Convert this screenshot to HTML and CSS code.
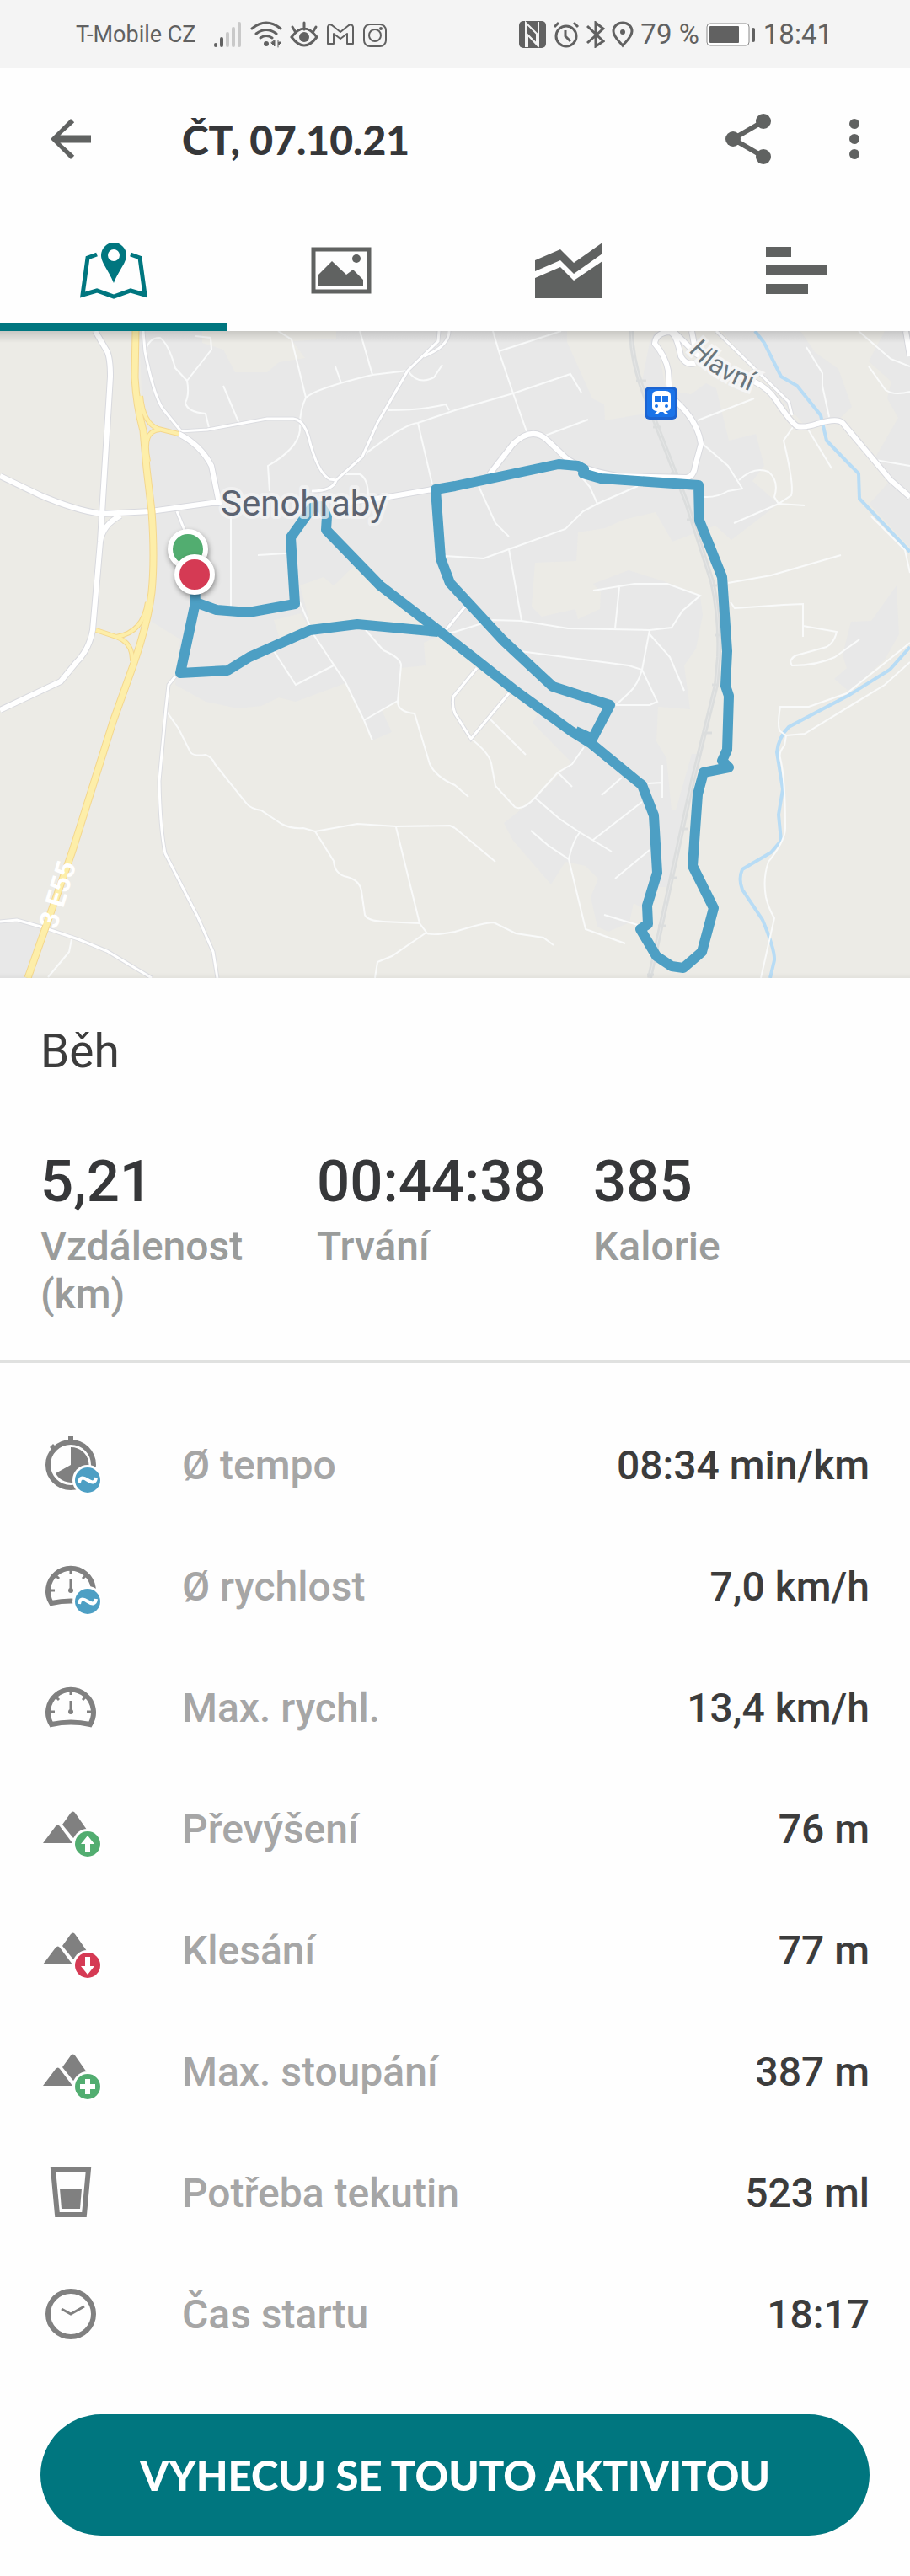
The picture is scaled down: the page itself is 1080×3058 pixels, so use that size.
FILE: index.html
```html
<!DOCTYPE html>
<html lang="cs">
<head>
    <meta charset="UTF-8">
    <meta name="viewport" content="width=device-width, initial-scale=1.0">
    <title>ČT, 07.10.21</title>
    <link rel="stylesheet" href="styles.css">
</head>
<body>
    <div class="status">
        <div class="status-left">
            <span class="carrier">T-Mobile CZ</span>
            <svg class="ic-signal" width="34" height="32" viewBox="0 0 34 32" stroke-width="4" stroke-linecap="round">
                <path d="M2 28v1M9 21v8" stroke="#616161"/>
                <path d="M16 15v14M23 9v20M30 3v26" stroke="#c9c9c9"/>
            </svg>
            <svg width="38" height="32" viewBox="0 0 38 32" fill="none" stroke="#616161" stroke-width="3" stroke-linecap="round">
                <path d="M2 9Q19-5 36 9M7 15q12-9 24 0M12 20q7-5 14 0"/>
                <circle cx="19" cy="27" r="3" fill="#616161" stroke="none"/>
                <path d="M29 23v7l-4-4zM33 23v8M34 25h3l-3 3z" fill="#616161" stroke-width="1"/>
            </svg>
            <svg width="34" height="32" viewBox="0 0 34 32" fill="none" stroke="#616161" stroke-width="3" stroke-linecap="round">
                <path d="M2 19q15-20 30 0q-15 20-30 0zM17 2v8M3 7l3 5M31 7l-3 5"/>
                <circle cx="17" cy="19" r="6" fill="#616161" stroke="none"/>
            </svg>
            <svg class="ic-mail" width="34" height="32" viewBox="0 0 34 32" fill="none" stroke="#616161" stroke-width="2" stroke-linejoin="round">
                <path d="M2 27V7q1-4 5-2l10 8 10-8q4-2 5 2v20h-7V15l-8 6-8-6v12z"/>
            </svg>
            <svg class="ic-insta" width="30" height="32" viewBox="0 0 30 32" fill="none" stroke="#616161" stroke-width="2">
                <rect x="2" y="4" width="26" height="26" rx="7"/>
                <circle cx="15" cy="17" r="7"/>
                <circle cx="22" cy="9" r="1"/>
            </svg>
        </div>
        <div class="status-right">
            <svg class="ic-nfc" width="32" height="32" viewBox="0 0 32 32">
                <rect width="32" height="32" rx="5" fill="#616161"/>
                <path d="M8 31V2l13 13v13L10 16v15M23 1v28L11 17" fill="none" stroke="#f4f4f4" stroke-width="2"/>
            </svg>
            <svg class="ic-alarm" width="32" height="32" viewBox="0 0 32 32" fill="none" stroke="#616161" stroke-width="3">
                <circle cx="16" cy="18" r="12"/>
                <path d="M15 11v7l6 6M2 7l5-5M30 7l-5-5"/>
            </svg>
            <svg class="ic-bt" width="22" height="32" viewBox="0 0 22 32" fill="none" stroke="#616161" stroke-width="3">
                <path d="M1 6l19 18-9 6V2l9 7L1 26"/>
            </svg>
            <svg class="ic-pin" width="26" height="32" viewBox="0 0 26 32" fill="none" stroke="#616161" stroke-width="3">
                <path d="M13 29C9 24 2 19 2 12a11 10 0 0 1 22 0c0 7-7 12-11 17z"/>
                <circle cx="13" cy="13" r="3" fill="#616161" stroke="none"/>
            </svg>
            <span>79 %</span>
            <svg class="ic-battery" width="60" height="28" viewBox="0 0 60 28">
                <rect x="1" y="1" width="50" height="26" rx="4" fill="#fff" stroke="#8a8a8a"/>
                <rect x="4" y="4" width="35" height="20" rx="1" fill="#616161"/>
                <rect x="54" y="6" width="4" height="17" rx="2" fill="#616161"/>
            </svg>
            <span>18:41</span>
        </div>
    </div>

    <header class="topbar">
        <button class="icon-btn" aria-label="Zpět">
            <svg width="72" height="72" viewBox="0 0 24 24"><path d="M20 10.500H7.800l5.600-5.100L12 4l-8 8 8 8 1.400-1.400L7.800 13.500H20z"/></svg>
        </button>
        <h1>ČT, 07.10.21</h1>
        <button class="icon-btn" aria-label="Sdílet">
            <svg width="72" height="72" viewBox="0 0 72 72">
                <path d="M54 15L18 36l36 21" fill="none" stroke="#606261" stroke-width="6"/>
                <circle cx="54" cy="15" r="9"/><circle cx="18" cy="36" r="9"/><circle cx="54" cy="57" r="9"/>
            </svg>
        </button>
        <button class="icon-btn more" aria-label="Více">
            <svg width="72" height="72" viewBox="0 0 72 72">
                <circle cx="36" cy="18" r="6"/><circle cx="36" cy="36" r="6"/><circle cx="36" cy="54" r="6"/>
            </svg>
        </button>
    </header>

    <nav class="tabs">
        <button class="tab active" aria-label="Mapa">
            <svg width="84" height="84" viewBox="0 0 84 84">
                <path d="M22 23L11 27 5 71l17-5 20 7 20-7 17 5-6-44-11-4" fill="none" stroke="#00767f" stroke-width="5"/>
                <path d="M42 9a15 15 0 0 0-15 15c0 9 8 16 15 33 7-17 15-24 15-33A15 15 0 0 0 42 9z" fill="#00767f"/>
                <circle cx="42" cy="24" r="7" fill="#fff"/>
            </svg>
        </button>
        <button class="tab" aria-label="Fotky">
            <svg width="84" height="84" viewBox="0 0 84 84">
                <rect x="9" y="17" width="66" height="50" fill="none" stroke="#606261" stroke-width="5"/>
                <path d="M15 60V47l16-16 17 16 8-6 12 12v7z"/>
                <circle cx="60" cy="28" r="5"/>
            </svg>
        </button>
        <button class="tab" aria-label="Grafy">
            <svg width="84" height="84" viewBox="0 0 84 84">
                <path d="M2 30l30-13 16 16 34-24v13L48 46 32 30 2 43z"/>
                <path d="M2 51l30-13 16 16 34-23v44H2z"/>
            </svg>
        </button>
        <button class="tab" aria-label="Mezičasy">
            <svg width="84" height="84" viewBox="0 0 84 84">
                <path d="M6 14h30v12H6zM6 36h72v12H6zM6 58h50v12H6z"/>
            </svg>
        </button>
    </nav>

    <div class="map">
        <svg viewBox="0 0 1080 768" role="img" aria-label="Trasa aktivity">
            <rect width="1080" height="768" fill="#ecebe6"/>
            <!-- built-up areas -->
            <g fill="#e8e8e8">
                <path d="M165 0H673V13L703 80 717 87 718 106 765 98 762 60 771 13 778 0 790 70 820 75 838 62 850 68 865 130 897 122 907 160 893 178 924 205 868 248 849 231 798 250 778 215 740 224 718 234 686 239 684 273 635 275 631 327 643 339 683 330 686 342 712 330 713 310 704 300 746 284 788 297 831 314 834 337 826 377 812 397 819 449 781 446 779 487 791 507 797 569H802L821 502H833L793 660H781L770 690 752 679 747 702 722 713 709 707 701 672 710 650 695 635 671 630 654 657 609 605 598 584 636 554 678 512 632 465 638 455 520 362 503 370 505 397 476 400 472 439 453 450 465 476 442 486 410 418 351 440 331 435 310 445 282 448 244 440 208 420 214 366 180 345 176 322 184 270 170 118z"/>
                <path d="M857 0h93l17 25 28 20 16 45-16 15-40 7-55-62z"/>
                <path d="M1050 0h30v257l-48-52 25-28-18-27 27-47-13-23 5-20-27-24z"/>
                <path d="M1064 302l3 58-17 30-42 38-18-15 15-13-5-15 10-40 24-1z"/>
                <path d="M0 701l20-2 28 8-14 61H0z"/>
            </g>
            <g fill="#ecebe6">
                <path d="M240 14l25 8 14 27h38l14-12 31-5-15-20 52-3V0H240z"/>
                <path d="M356 302l28-10 12 10 24-23 86 72-82-4-54 8z"/>
                <path d="M325 343l32-8 10 18-34 16z"/>
            </g>
            <!-- river -->
            <g fill="none" stroke="#b8dcf5" stroke-width="4">
                <path d="M896 0L907 14 927 54 946 65 974 100 981 130 1004 154 1019 169 1020 199 1080 262"/>
                <path d="M1080 375L1056 402 1008 432 936 470Q924 482 922 500L929 544 924 574 927 605 915 619 881 639Q876 650 881 663L905 699Q920 735 919 747L914 768"/>
            </g>
            <!-- railway -->
            <g fill="none" stroke="#dbdddd">
                <path d="M749 0Q750 40 768 83L815 204 845 297Q855 340 853 387L850 420 822 534 771 768" stroke-width="6"/>
                <path d="M749 0Q750 40 768 83L815 204 845 297Q855 340 853 387L850 420 822 534 771 768" stroke="#e5e6e6" stroke-width="1"/>
                <path d="M755 59h12M775 114h10M796 169h9M815 224h7M843 302h8M849 361h6M845 420h8M836 477h9M809 591h8M795 649h9M781 706h9M768 764h8" stroke-width="3"/>
            </g>
            <!-- footpaths and lanes -->
            <g class="lane">
                <path d="M173 22q5-15 17-14 10 7 18 36l14 15q3 16-2 26 2 11 24 13l4 17M222 59l29-37-1-14-18-2M265 65l19 45"/>
                <path d="M330 0l16 10 17 69q-8 16-7 39-3 22-38 42l2 30M363 79q12-11 79-27l42-5M427 0l15 52M398 42l7 20"/>
                <path d="M484 47q12 18 31 8l10-15M460 94q40 0 69-7l4 7M432 147q48-37 64-38l44-15 69-20 68-23 13 22M496 109l17 73M403 170h24q10 5 10 27"/>
                <path d="M274 220v107M306 266l33-2M356 322l16 38 38 57 22 45 10 24M434 355l21 24q21 9 21 18l-4 43q0 12 20 14l18 60q8 16 30 25l16 14"/>
                <path d="M325 380l26 40 45-23M432 462l40-23M585 0l7 24 17 50 17 48M592 24l74-24M647 124l51-19"/>
                <path d="M957 19l19 31v15l8 37M1019 0l38 33 23 9M1031 42l20 28q10 7 29 2M828 106l67-26M835 135l29 25 17 27-17 3q-14 8-28 7"/>
                <path d="M877 177q18-17 35-10 13 11 7 30l5 8 15-10q4-10-9-65l11-16M871 228l53-23 31 2M958 115l29 48M1034 220l40 40 6 27M1039 153l41 7"/>
                <path d="M864 299l51-9 83-24M867 322l5 7 58-4 23-1v39M953 350l40 7q-3 13-12 18l-36 10q-10 5-5 12 30 0 51-10l29-21"/>
                <path d="M1080 370l-75 60-45 16h-34q-4 24 0 29l7 5 22-2 95-58 30-27M933 480l-2 12q-7 8-5 15 6 23 6 83 0 15-20 40-7 20-3 42 3 13 10 25l-16 71"/>
                <path d="M568 184l20 44 16 16M690 173l10 12 9 20M757 184l-48 21-17 9-21 21-67 24-30 11-46-3M604 259l15 85"/>
                <path d="M520 362l20-5 45-14 34 1 55 9 97 2 26-3 13-20 21-18-39-14h-39l-49 8M735 304l-5 49M771 355l-9 47q-5 18-15 27l-16 15M771 360l24 27 17 40M617 380l129 17 16 5 18 38-9 4h-40"/>
                <path d="M581 460l43 43M559 484q21 16 24 29l5 27 23 25q9 5 24-11l27-30 17-10 14-20M662 524l17 17M738 530l-24 21M769 537l17-1M786 515v39"/>
                <path d="M635 554l29 25 24 16 38 23M762 559l-58 45M688 595q-8 10-13 32l-24-16-21-18M675 627l20 83 47 17M771 616l-41 34M717 693l40 12M540 590l48 40"/>
                <path d="M198 452l14 20 14 28q4 5 18 3 8 3 11 11l37 46q5 7 18 9l24 16q11 6 26 5l14 4 50-9 46 3 64-1 6 3"/>
                <path d="M374 594l22 35q1 16 16 19 15 4 17 17l4 28q3 7 22 8l43 2M470 589l28 114 9 12q8 3 33-2 35-11 46-11l26 13 33 5 12 9M506 714l-41 28-17 7-3 19M85 722l-3 15-25 30"/>
            </g>
            <!-- streets -->
            <g class="street casing">
                <path d="M170 0l2 24q10 51 21 68l22 27 31-2 71-13h31q12 1 18 21 11 45 26 51l7 1M370 190q25 0 29-13l31-28 18-40 36-62 36-35 1-12M503 30q30-12 30-30"/>
                <path d="M210 214l10 25M208 410l-8 10-3 27-8 87q1 56 7 86l38 74 19 43 5 31M0 701l20-2 28 8 45 15 34 14 53 32M566 400l-28 34q-2 11 2 20l19 30 45-54M529 355l23-28M850 0l86 84 4 16"/>
            </g>
            <g class="street">
                <path d="M170 0l2 24q10 51 21 68l22 27 31-2 71-13h31q12 1 18 21 11 45 26 51l7 1M370 190q25 0 29-13l31-28 18-40 36-62 36-35 1-12M503 30q30-12 30-30"/>
                <path d="M210 214l10 25M208 410l-8 10-3 27-8 87q1 56 7 86l38 74 19 43 5 31M0 701l20-2 28 8 45 15 34 14 53 32M566 400l-28 34q-2 11 2 20l19 30 45-54M529 355l23-28M850 0l86 84 4 16"/>
            </g>
            <g class="road casing">
                <path d="M113 0l14 24q4 8 4 30l-10 163-2 33-4 47-5 58q-4 23-20 39l-18 22L0 450M0 172l48 23q42 18 73 22l58-3 72-10h12M400 205l61-8 52-9M212 122q26 13 39 38l9 44M143 219q-21 11-24 31"/>
                <path d="M581 170l28-36q23-22 41-4l21 20q19 15 62 22l82 2q9-2 10-14l7-26q-4-30-37-57l-2-30q-3-17-16-32 1-13 18-14 8 3 13 29 7 12 17 8M799 0l27 27q34 23 69 33 17 8 26 22 17 26 25 31 9 2 24-3 24-7 30-1l57 68 23 20M821 0l5 27M1075 0l5 30"/>
            </g>
            <g class="road">
                <path d="M113 0l14 24q4 8 4 30l-10 163-2 33-4 47-5 58q-4 23-20 39l-18 22L0 450M0 172l48 23q42 18 73 22l58-3 72-10h12M400 205l61-8 52-9M212 122q26 13 39 38l9 44M143 219q-21 11-24 31"/>
                <path d="M581 170l28-36q23-22 41-4l21 20q19 15 62 22l82 2q9-2 10-14l7-26q-4-30-37-57l-2-30q-3-17-16-32 1-13 18-14 8 3 13 29 7 12 17 8M799 0l27 27q34 23 69 33 17 8 26 22 17 26 25 31 9 2 24-3 24-7 30-1l57 68 23 20M821 0l5 27M1075 0l5 30"/>
            </g>
            <!-- E55 -->
            <g fill="none" stroke="#f4d78d">
                <path d="M167 77q3 33 21 39l24 6M176 155q-8-37 14-38M175 322q-5 36-37 41l-24-8M138 363q20 7 19 29" stroke-width="6"/>
                <path d="M161 0L160 55Q162 90 170 118L174 163 180 214Q184 270 180 310 176 345 158 397L134 464 86 617 33 768" stroke-width="9"/>
            </g>
            <g fill="none" stroke="#fdeea9">
                <path d="M167 77q3 33 21 39l24 6M176 155q-8-37 14-38M175 322q-5 36-37 41l-24-8M138 363q20 7 19 29" stroke-width="4"/>
                <path d="M161 0L160 55Q162 90 170 118L174 163 180 214Q184 270 180 310 176 345 158 397L134 464 86 617 33 768" stroke-width="7"/>
            </g>
            <text class="road-no" transform="translate(67 711) rotate(-73)">3 E55</text>
            <!-- recorded route -->
            <g class="route">
                <path d="M231 300L232 322 257 331 295 334 350 324 345 245 370 210 381 208 388 220 387 236 451 302 520 355 561 387 609 425 678 475 702 490 762 539 776 575 780 643 768 682 769 704 760 710 779 742 797 754 811 756 833 737 847 685 822 635 828 550 835 524 865 518 857 510 863 497 865 433 861 421 863 380 857 292 830 225 829 183 713 175 692 169 693 164 686 160 663 158 540 184 517 188 523 270 534 299 597 367 656 422 724 444 703 484 683 475"/>
                <path d="M520 357L424 348 368 355 296 387 270 403 214 406 232 322"/>
            </g>
            <circle class="marker" cx="223" cy="259" r="21" fill="#52ad70"/>
            <circle class="marker" cx="231" cy="289" r="21" fill="#d53a54"/>
            <!-- railway station -->
            <rect x="765" y="66" width="39" height="39" rx="6" fill="#1c64d1"/>
            <rect x="768" y="69" width="33" height="33" rx="4" fill="#1a73e8"/>
            <path d="M774 77q0-6 6-6h10q6 0 6 6v13q0 5-6 5l3 3h-4l-2-2h-4l-2 2h-4l3-3q-6 0-6-5z" fill="#fff"/>
            <path d="M777 77h7v7h-7zM786 77h7v7h-7z" fill="#1a73e8"/>
            <circle cx="779" cy="89" r="2" fill="#1a73e8"/><circle cx="791" cy="89" r="2" fill="#1a73e8"/>
            <path id="hlavni" d="M817 23Q843 56 905 77" fill="none"/>
            <text class="street-name"><textPath href="#hlavni">Hlavní</textPath></text>
            <text class="town" x="262" y="219">Senohraby</text>
        </svg>
    </div>

    <main>
        <section class="summary">
            <h2>Běh</h2>
            <dl class="totals">
                <div><dd>5,21</dd><dt>Vzdálenost (km)</dt></div>
                <div><dd>00:44:38</dd><dt>Trvání</dt></div>
                <div><dd>385</dd><dt>Kalorie</dt></div>
            </dl>
        </section>

        <dl class="details">
            <div class="row">
                <svg width="72" height="72" viewBox="0 0 72 72">
                    <circle cx="36" cy="36" r="27" class="line"/>
                    <path d="M33 2h6v6h-6zM11 15l4-4 3 3-4 4z"/>
                    <path d="M36 36V15a21 21 0 1 1-18 31z"/>
                    <circle cx="56" cy="54" r="18" fill="#fff"/><circle cx="56" cy="54" r="15" fill="#4d9fc4"/>
                    <path d="M46 57q1-9 10-3t10-3" fill="none" stroke="#fff" stroke-width="4"/>
                </svg>
                <dt>Ø tempo</dt><dd>08:34 min/km</dd>
            </div>
            <div class="row">
                <svg width="72" height="72" viewBox="0 0 72 72">
                    <path d="M13 56A27 27 0 1 1 59 56Q36 51 13 56z" class="line"/>
                    <path d="M11 41h6M61 41h-6M36 15v6M18 23l4 4M54 23l-4 4M36 28v12" class="tick"/>
                    <circle cx="36" cy="41" r="3"/>
                    <circle cx="56" cy="54" r="18" fill="#fff"/><circle cx="56" cy="54" r="15" fill="#4d9fc4"/>
                    <path d="M46 57q1-9 10-3t10-3" fill="none" stroke="#fff" stroke-width="4"/>
                </svg>
                <dt>Ø rychlost</dt><dd>7,0 km/h</dd>
            </div>
            <div class="row">
                <svg width="72" height="72" viewBox="0 0 72 72">
                    <path d="M13 56A27 27 0 1 1 59 56Q36 51 13 56z" class="line"/>
                    <path d="M11 41h6M61 41h-6M36 15v6M18 23l4 4M54 23l-4 4M36 28v12" class="tick"/>
                    <circle cx="36" cy="41" r="3"/>
                </svg>
                <dt>Max. rychl.</dt><dd>13,4 km/h</dd>
            </div>
            <div class="row">
                <svg width="72" height="72" viewBox="0 0 72 72">
                    <path d="M3 53l15-20q3-3 5 0l15 20zM26 31l10-14q3-3 5 0l14 20-16 10z"/>
                    <circle cx="56" cy="54" r="18" fill="#fff"/><circle cx="56" cy="54" r="15" fill="#52ad70"/>
                    <path d="M56 44l8 10h-5v10h-6V54h-5z" fill="#fff"/>
                </svg>
                <dt>Převýšení</dt><dd>76 m</dd>
            </div>
            <div class="row">
                <svg width="72" height="72" viewBox="0 0 72 72">
                    <path d="M3 53l15-20q3-3 5 0l15 20zM26 31l10-14q3-3 5 0l14 20-16 10z"/>
                    <circle cx="56" cy="54" r="18" fill="#fff"/><circle cx="56" cy="54" r="15" fill="#d53a54"/>
                    <path d="M56 65l8-10h-5V44h-6v11h-5z" fill="#fff"/>
                </svg>
                <dt>Klesání</dt><dd>77 m</dd>
            </div>
            <div class="row">
                <svg width="72" height="72" viewBox="0 0 72 72">
                    <path d="M3 53l15-20q3-3 5 0l15 20zM26 31l10-14q3-3 5 0l14 20-16 10z"/>
                    <circle cx="56" cy="54" r="18" fill="#fff"/><circle cx="56" cy="54" r="15" fill="#52ad70"/>
                    <path d="M53 45h6v6h6v6h-6v6h-6v-6h-6v-6h6z" fill="#fff"/>
                </svg>
                <dt>Max. stoupání</dt><dd>387 m</dd>
            </div>
            <div class="row">
                <svg width="72" height="72" viewBox="0 0 72 72">
                    <path d="M15 8h42l-5 54H20z" class="line"/>
                    <path d="M23 31h26l-2 24H25z"/>
                </svg>
                <dt>Potřeba tekutin</dt><dd>523 ml</dd>
            </div>
            <div class="row">
                <svg width="72" height="72" viewBox="0 0 72 72">
                    <circle cx="36" cy="36" r="27" class="line"/>
                    <path d="M25 30l11 6 16-9" class="tick"/>
                </svg>
                <dt>Čas startu</dt><dd>18:17</dd>
            </div>
        </dl>

        <button class="cta">VYHECUJ SE TOUTO AKTIVITOU</button>
    </main>
</body>
</html>
```
FILE: styles.css
```css
*{
    box-sizing: border-box;
}
body{
    margin: 0;
    background: #fefefe;
    color: #3c3c3c;
    font-family: Roboto, "Noto Sans", sans-serif;
}
h1, h2, dl, dt, dd{
    margin: 0;
}
svg{
    display: block;
    flex: none;
}
button{
    border: 0;
    padding: 0;
    background: none;
    cursor: pointer;
}

/* status bar */
.status{
    display: flex;
    justify-content: space-between;
    height: 81px;
    padding: 0 92px 0 90px;
    background: #f4f4f4;
    color: #616161;
    font-size: 33px;
}
.status-left, .status-right{
    display: flex;
    align-items: center;
}
.status-left{
    gap: 9px;
}
.carrier{
    font-size: 27px;
    margin-right: 12px;
}
.status-right{
    gap: 8px;
}

/* title bar */
.topbar{
    display: flex;
    align-items: center;
    height: 168px;
    padding: 0 30px 0 48px;
}
.topbar h1{
    flex: 1;
    margin-left: 96px;
    color: #363739;
    font-family: Lato, sans-serif;
    font-size: 48px;
    font-weight: 900;
}
.icon-btn{
    fill: #606261;
}
.more{
    margin-left: 54px;
}

/* tabs */
.tabs{
    display: grid;
    grid-template-columns: repeat(4, 1fr);
}
.tab{
    display: flex;
    justify-content: center;
    align-items: center;
    height: 144px;
    fill: #606261;
}
.tab.active{
    box-shadow: inset 0 -9px #00767f;
}

/* map */
.map{
    position: relative;
}
.map svg{
    width: 100%;
    height: auto;
}
.map::after{
    content: "";
    position: absolute;
    inset: 0;
    background: linear-gradient(rgba(0, 0, 0, .15), transparent 14px, transparent calc(100% - 6px), rgba(0, 0, 0, .04));
}
.lane{
    fill: none;
    stroke: #f9fafa;
    stroke-width: 2;
}
.street{
    fill: none;
    stroke: #fff;
    stroke-width: 3;
}
.street.casing{
    stroke: #dcdde1;
    stroke-width: 5;
}
.road{
    fill: none;
    stroke: #fff;
    stroke-width: 6;
}
.road.casing{
    stroke: #d8d9de;
    stroke-width: 8;
}
.route{
    fill: none;
    stroke: #4d9fc4;
    stroke-width: 12;
    stroke-linejoin: round;
}
.marker{
    stroke: #fff;
    stroke-width: 6;
    filter: drop-shadow(1px 3px 3px rgba(0, 0, 0, .4));
}
.town{
    fill: #5b6371;
    stroke: rgba(245, 245, 245, .7);
    stroke-width: 8;
    stroke-linejoin: round;
    paint-order: stroke;
    font-size: 42px;
}
.street-name{
    fill: #69757c;
    stroke: #f5f5f5;
    stroke-width: 7;
    paint-order: stroke;
    font-size: 32px;
}
.road-no{
    fill: #fff;
    font-size: 32px;
    font-weight: 700;
}

/* summary */
.summary{
    padding: 48px 48px 50px;
    border-bottom: 3px solid #e0e1e0;
}
.summary h2{
    font-size: 55px;
    font-weight: 400;
    line-height: 78px;
}
.totals{
    display: grid;
    grid-template-columns: repeat(3, 1fr);
    margin-top: 74px;
    font-weight: 500;
}
.totals dd{
    color: #363739;
    font-size: 69px;
    line-height: 84px;
}
.totals dt{
    max-width: 270px;
    margin-top: 6px;
    color: #9a9c9b;
    font-size: 48px;
    line-height: 57px;
}
.totals > div{
    display: flex;
    flex-direction: column;
}

/* details */
.details{
    padding: 49px 48px 47px;
    font-size: 48px;
    font-weight: 500;
}
.row{
    display: flex;
    align-items: center;
    height: 144px;
    fill: #808080;
}
.row dt{
    flex: 1;
    margin-left: 96px;
    color: #a6a6a6;
}
.line{
    fill: none;
    stroke: #808080;
    stroke-width: 6;
}
.tick{
    fill: none;
    stroke: #808080;
    stroke-width: 3;
}
.cta{
    display: block;
    width: calc(100% - 96px);
    height: 144px;
    margin: 0 48px 48px;
    border-radius: 72px;
    background: #00767f;
    color: #fff;
    font-family: Lato, sans-serif;
    font-size: 49px;
    font-weight: 900;
}
```
